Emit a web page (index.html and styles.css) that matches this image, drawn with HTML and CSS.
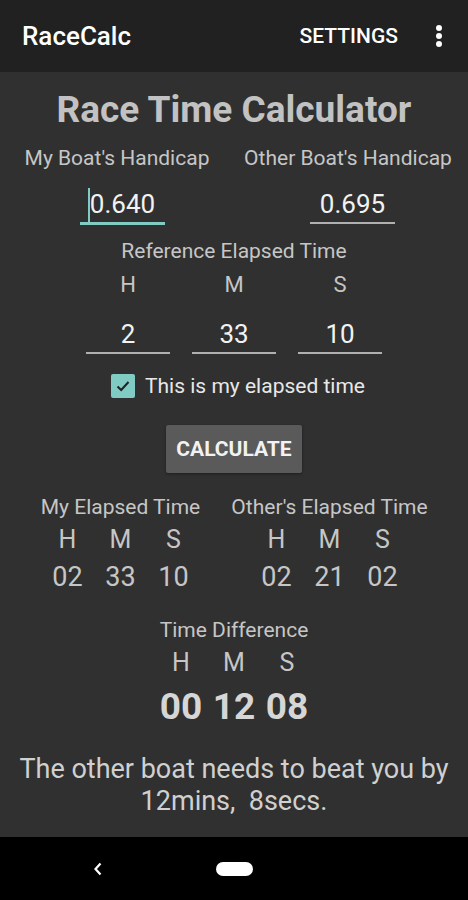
FILE: index.html
```html
<!DOCTYPE html>
<html lang="en">
<head>
    <meta charset="UTF-8">
    <meta name="viewport" content="width=device-width, initial-scale=1.0">
    <title>RaceCalc</title>
    <link rel="stylesheet" href="styles.css">
</head>
<body>
    <header class="app-bar">
        <span class="app-title">RaceCalc</span>
        <span class="app-action">SETTINGS</span>
        <svg class="overflow" width="8" height="22" viewBox="0 0 8 22">
            <circle cx="4" cy="3" r="3" fill="#fff"/>
            <circle cx="4" cy="11" r="3" fill="#fff"/>
            <circle cx="4" cy="19" r="3" fill="#fff"/>
        </svg>
    </header>

    <main class="content">
        <h1>Race Time Calculator</h1>

        <div class="handicaps">
            <div class="handicap">
                <div class="label">My Boat's Handicap</div>
                <div class="field focused"><span class="cursor"></span>0.640</div>
            </div>
            <div class="handicap other">
                <div class="label">Other Boat's Handicap</div>
                <div class="field">0.695</div>
            </div>
        </div>

        <div class="label ref-label">Reference Elapsed Time</div>
        <div class="ref-grid">
            <div class="unit">H</div>
            <div class="unit">M</div>
            <div class="unit">S</div>
            <div class="field small">2</div>
            <div class="field small">33</div>
            <div class="field small">10</div>
        </div>

        <label class="check">
            <span class="box">
                <svg width="18" height="18" viewBox="0 0 18 18"><path d="M3.5 9.5 L7.2 13 L14.5 5" fill="none" stroke="#222" stroke-width="2"/></svg>
            </span>
            This is my elapsed time
        </label>

        <button class="calc">CALCULATE</button>

        <div class="results">
            <div class="result">
                <div class="label">My Elapsed Time</div>
                <div class="hms">
                    <span>H</span><span>M</span><span>S</span>
                    <span class="num">02</span><span class="num">33</span><span class="num">10</span>
                </div>
            </div>
            <div class="result">
                <div class="label">Other's Elapsed Time</div>
                <div class="hms">
                    <span>H</span><span>M</span><span>S</span>
                    <span class="num">02</span><span class="num">21</span><span class="num">02</span>
                </div>
            </div>
        </div>

        <div class="label diff-label">Time Difference</div>
        <div class="hms diff">
            <span>H</span><span>M</span><span>S</span>
            <span class="big">00</span><span class="big">12</span><span class="big">08</span>
        </div>

        <p class="summary">The other boat needs to beat you by 12mins,&nbsp; 8secs.</p>
    </main>

    <nav class="nav-bar">
        <svg class="back" width="10" height="14" viewBox="0 0 10 14"><path d="M7.5 1.5 L2.5 7 L7.5 12.5" fill="none" stroke="#fff" stroke-width="2.2"/></svg>
        <span class="home"></span>
    </nav>
</body>
</html>
```

FILE: styles.css
```css
body {
    margin: 0;
    width: 468px;
    height: 900px;
    background: #303030;
    font-family: Roboto, 'Noto Sans', sans-serif;
    color: #c6c6c6;
    display: flex;
    flex-direction: column;
    overflow: hidden;
}

.app-bar {
    height: 72px;
    background: #212121;
    display: flex;
    align-items: center;
    padding: 0 25px 0 22px;
    color: #fff;
    flex-shrink: 0;
}

.app-title {
    font-size: 26px;
    font-weight: 500;
    flex: 1;
}

.app-action {
    font-size: 21px;
    font-weight: 500;
    margin-right: 37px;
}

.content {
    flex: 1;
    display: flex;
    flex-direction: column;
    align-items: center;
}

h1 {
    margin: 16px 0 0;
    font-size: 37px;
    font-weight: 700;
    color: #c2c2c2;
    line-height: 44px;
}

.label {
    font-size: 21px;
    line-height: 26px;
    color: #c6c6c6;
    white-space: nowrap;
}

.handicaps {
    display: grid;
    grid-template-columns: 234px 228px;
    margin-top: 13px;
    margin-right: 6px;
}

.handicap {
    display: flex;
    flex-direction: column;
    align-items: center;
}

.field {
    position: relative;
    width: 85px;
    text-align: center;
    font-size: 26px;
    line-height: 36px;
    color: #f2f2f2;
    border-bottom: 2px solid #b0b0b0;
    margin-top: 15px;
    box-sizing: content-box;
}

.handicap .field {
    margin-left: 11px;
}

.handicap.other .field {
    margin-left: 9px;
}

.field.focused {
    border-bottom: 3px solid #80cbc4;
}

.cursor {
    position: absolute;
    left: 8px;
    top: 2px;
    width: 2px;
    height: 34px;
    background: #80cbc4;
}

.ref-label {
    margin-top: 13px;
}

.ref-grid {
    display: grid;
    grid-template-columns: repeat(3, 106px);
    justify-items: center;
    margin-top: 7px;
}

.unit {
    font-size: 22px;
    line-height: 28px;
    color: #c6c6c6;
}

.field.small {
    width: 84px;
    margin-top: 17px;
}

.check {
    display: flex;
    align-items: center;
    gap: 10px;
    margin-top: 18px;
    padding-left: 8px;
    font-size: 21px;
    line-height: 28px;
    color: #e8e8e8;
}

.box {
    width: 24px;
    height: 24px;
    border-radius: 2px;
    background: #80cbc4;
    display: flex;
    align-items: center;
    justify-content: center;
}

.calc {
    margin-top: 25px;
    height: 48px;
    width: 136px;
    border: none;
    border-radius: 2px;
    background: #5a5a5a;
    color: #f2f2f2;
    font-family: inherit;
    font-size: 21px;
    font-weight: 700;
    box-shadow: 0 1px 3px rgba(0, 0, 0, 0.4);
}

.results {
    display: grid;
    grid-template-columns: 209px 209px;
    margin-top: 21px;
    margin-right: 18px;
}

.result {
    display: flex;
    flex-direction: column;
    align-items: center;
}

.hms {
    display: grid;
    grid-template-columns: repeat(3, 53px);
    justify-items: center;
    font-size: 25px;
    line-height: 28px;
    margin-top: 6px;
    row-gap: 7px;
}

.hms .num {
    font-size: 27px;
    line-height: 32px;
}

.diff-label {
    margin-top: 24px;
}

.diff {
    row-gap: 9px;
}

.hms .big {
    font-size: 37px;
    font-weight: 700;
    line-height: 42px;
    color: #d6d6d6;
}

.summary {
    margin: 25px 10px 0;
    text-align: center;
    font-size: 27px;
    line-height: 32px;
    color: #d0d0d0;
}

.nav-bar {
    height: 63px;
    background: #000;
    position: relative;
    flex-shrink: 0;
}

.back {
    position: absolute;
    left: 93px;
    top: 25px;
}

.home {
    position: absolute;
    left: 216px;
    top: 25px;
    width: 37px;
    height: 14px;
    border-radius: 7px;
    background: #fff;
}
```
